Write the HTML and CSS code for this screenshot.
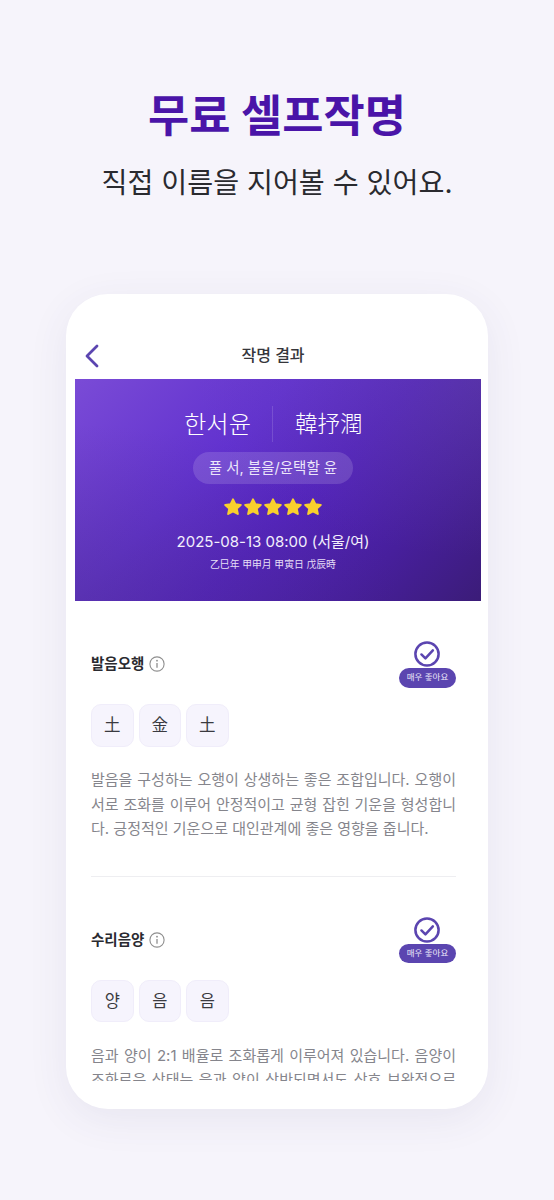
FILE: index.html
```html
<!DOCTYPE html>
<html lang="ko">
<head>
<meta charset="utf-8">
<title>무료 셀프작명</title>
<link rel="stylesheet" href="styles.css">
</head>
<body>
<main class="page">
  <header class="hero">
    <h1 class="hero-title">무료 셀프작명</h1>
    <p class="hero-sub">직접 이름을 지어볼 수 있어요.</p>
  </header>
  <section class="phone">
    <div class="phone-clip">
      <div class="nav">
        <svg class="nav-back" viewBox="0 0 14 24" width="14" height="24"><path d="M12 2 2 12l10 10" fill="none" stroke="#5b45b0" stroke-width="2.800" stroke-linecap="round" stroke-linejoin="round"/></svg>
        <span class="nav-title">작명 결과</span>
      </div>
      <div class="banner">
        <div class="names">
          <span class="name name-ko">한서윤</span>
          <span class="name name-hj">韓抒潤</span>
        </div>
        <div class="meaning">풀 서, 불을/윤택할 윤</div>
        <div class="stars">
          <svg class="star" viewBox="0 0 24 24"><path d="M12 2.800l2.800 5.900 6.500.8-4.800 4.400 1.300 6.400-5.800-3.200-5.800 3.200 1.300-6.400-4.800-4.400 6.500-.8z"/></svg>
          <svg class="star" viewBox="0 0 24 24"><path d="M12 2.800l2.800 5.900 6.500.8-4.800 4.400 1.300 6.400-5.800-3.200-5.800 3.200 1.300-6.400-4.800-4.400 6.500-.8z"/></svg>
          <svg class="star" viewBox="0 0 24 24"><path d="M12 2.800l2.800 5.900 6.500.8-4.800 4.400 1.300 6.400-5.800-3.200-5.800 3.200 1.300-6.400-4.800-4.400 6.500-.8z"/></svg>
          <svg class="star" viewBox="0 0 24 24"><path d="M12 2.800l2.800 5.900 6.500.8-4.800 4.400 1.300 6.400-5.800-3.200-5.800 3.200 1.300-6.400-4.800-4.400 6.500-.8z"/></svg>
          <svg class="star" viewBox="0 0 24 24"><path d="M12 2.800l2.800 5.900 6.500.8-4.800 4.400 1.300 6.400-5.800-3.200-5.800 3.200 1.300-6.400-4.800-4.400 6.500-.8z"/></svg>
        </div>
        <div class="birth">2025-08-13 08:00 (서울/여)</div>
        <div class="saju">乙巳年 甲申月 甲寅日 戊辰時</div>
      </div>
      <article class="item">
        <div class="item-head">
          <div class="item-label">
            <h2 class="item-title">발음오행</h2>
            <svg class="info" viewBox="0 0 16 16" width="16" height="16"><circle cx="8" cy="8" r="7.100" fill="none" stroke="#8f8f8f" stroke-width="1.100"/><circle cx="8" cy="4.700" r=".9" fill="#8f8f8f"/><path d="M8 7v4.800" stroke="#8f8f8f" stroke-width="1.300" fill="none"/></svg>
          </div>
          <div class="grade">
            <svg class="grade-icon" viewBox="0 0 28 28" width="26" height="26"><circle cx="14" cy="14" r="12.500" fill="#fff" stroke="#5b45b0" stroke-width="2.700"/><path d="M8 14.500l4.300 4.200 8-8.600" fill="none" stroke="#5b45b0" stroke-width="2.700" stroke-linecap="round" stroke-linejoin="round"/></svg>
            <span class="grade-tag">매우 좋아요</span>
          </div>
        </div>
        <div class="chips">
          <span class="chip">土</span>
          <span class="chip">金</span>
          <span class="chip">土</span>
        </div>
        <p class="desc">발음을 구성하는 오행이 상생하는 좋은 조합입니다. 오행이 서로 조화를 이루어 안정적이고 균형 잡힌 기운을 형성합니다. 긍정적인 기운으로 대인관계에 좋은 영향을 줍니다.</p>
      </article>
      <hr class="rule">
      <article class="item">
        <div class="item-head">
          <div class="item-label">
            <h2 class="item-title">수리음양</h2>
            <svg class="info" viewBox="0 0 16 16" width="16" height="16"><circle cx="8" cy="8" r="7.100" fill="none" stroke="#8f8f8f" stroke-width="1.100"/><circle cx="8" cy="4.700" r=".9" fill="#8f8f8f"/><path d="M8 7v4.800" stroke="#8f8f8f" stroke-width="1.300" fill="none"/></svg>
          </div>
          <div class="grade">
            <svg class="grade-icon" viewBox="0 0 28 28" width="26" height="26"><circle cx="14" cy="14" r="12.500" fill="#fff" stroke="#5b45b0" stroke-width="2.700"/><path d="M8 14.500l4.300 4.200 8-8.600" fill="none" stroke="#5b45b0" stroke-width="2.700" stroke-linecap="round" stroke-linejoin="round"/></svg>
            <span class="grade-tag">매우 좋아요</span>
          </div>
        </div>
        <div class="chips">
          <span class="chip">양</span>
          <span class="chip">음</span>
          <span class="chip">음</span>
        </div>
        <p class="desc">음과 양이 2:1 배율로 조화롭게 이루어져 있습니다. 음양이 조화로운 상태는 음과 양이 상반되면서도 상호 보완적으로 작용하여 균형을 이룹니다.</p>
      </article>
    </div>
  </section>
</main>
</body>
</html>
```
FILE: styles.css
```css
* { box-sizing: border-box; }
html, body { margin: 0; padding: 0; }
body {
  background: #f6f4fb;
  font-family: "Inter", "Noto Sans CJK KR", "Noto Sans", sans-serif;
  color: #26262b;
}
.page {
  width: 554px;
  height: 1200px;
  overflow: hidden;
  padding-top: 86px;
}
.hero { text-align: center; }
.hero-title {
  margin: 0;
  font-size: 44.800px;
  line-height: 60px;
  font-weight: 700;
  color: #4a14a8;
}
.hero-sub {
  margin: 16px 0 0;
  font-size: 28.200px;
  line-height: 42px;
  font-weight: 400;
  color: #2a2a2f;
}
.phone {
  width: 422px;
  height: 815px;
  margin: 90px 0 0 66px;
  background: #fff;
  border-radius: 42px;
  padding: 0 7px 28px 9px;
  box-shadow: 0 10px 40px rgba(70, 60, 110, .08);
}
.phone-clip { height: 787px; overflow: hidden; }
.nav {
  height: 85px;
  padding: 46px 10px 0 0;
  position: relative;
  text-align: center;
}
.nav-title { font-size: 16px; line-height: 30px; font-weight: 500; display: block; color: #36363b; }
.nav-back { position: absolute; left: 10px; top: 50px; }
.banner {
  height: 222px;
  padding: 27px 10px 0 0;
  background:
    radial-gradient(70% 80% at 100% 0%, rgba(120, 110, 150, .22) 0%, rgba(120, 110, 150, 0) 100%),
    radial-gradient(80% 80% at 0% 100%, rgba(70, 50, 110, .30) 0%, rgba(70, 50, 110, 0) 100%),
    linear-gradient(135deg, #7a4bd6 0%, #6232cf 35%, #5424bd 55%, #471f9c 78%, #3b1c78 100%);
  color: #fff;
  display: flex;
  flex-direction: column;
  align-items: center;
}
.names { display: flex; justify-content: center; height: 36px; align-items: center; }
.name { width: 89px; font-size: 24.300px; line-height: 36px; font-weight: 300; white-space: nowrap; }
.name-ko { text-align: right; padding-right: 23px; border-right: 1px solid rgba(255, 255, 255, .14); }
.name-hj { text-align: left; padding-left: 22px; font-size: 22.500px; }
.meaning {
  margin-top: 10px;
  height: 32px;
  padding: 0 16px;
  border-radius: 16px;
  background: rgba(255, 255, 255, .14);
  font-size: 14.500px;
  line-height: 31px;
  color: #ece6fa;
}
.stars { display: flex; margin-top: 13px; height: 20px; }
.star { width: 20px; height: 20px; fill: #f9d02c; stroke: #f9d02c; stroke-width: 2.400; stroke-linejoin: round; }
.birth { margin-top: 13px; font-size: 15px; line-height: 24px; color: #f3effc; }
.saju { margin-top: 3px; font-size: 9.800px; line-height: 16px; color: #e6dff7; }
.item { padding: 0 25px 0 16px; }
.item-head { display: flex; justify-content: space-between; align-items: flex-start; height: 103px; padding-top: 40px; }
.item-label { display: flex; align-items: center; gap: 5px; height: 46px; }
.item-title { margin: 0; font-size: 14.500px; font-weight: 700; color: #2a2a30; line-height: 46px; }
.info { display: block; }
.grade { display: flex; flex-direction: column; align-items: center; width: 57px; }
.grade-icon { display: block; margin: 0 1px 1px 0; }
.grade-tag {
  width: 57px;
  height: 19.500px;
  border-radius: 10px;
  background: #5b45b0;
  color: #ece8fa;
  font-size: 8.500px;
  line-height: 19.500px;
  text-align: center;
}
.chips { display: flex; gap: 5px; }
.chip {
  width: 42.500px;
  height: 42.500px;
  border-radius: 10px;
  background: #f6f4fd;
  border: 1px solid #f0edfa;
  font-size: 16.500px;
  font-weight: 400;
  line-height: 40.500px;
  text-align: center;
  color: #3a3a40;
}
.desc {
  margin: 21.500px 0 0;
  font-size: 15px;
  line-height: 24.500px;
  color: #85858c;
  word-break: break-all;
  text-align: justify;
}
.rule { margin: 34px 25px 0 16px; border: 0; border-top: 1px solid #eeeef1; }
```
